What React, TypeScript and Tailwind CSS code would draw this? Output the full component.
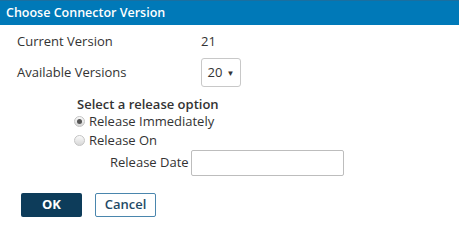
export default function App() {
  return (
    <div className="w-[459px] h-[227px] bg-white font-['Open_Sans',sans-serif] text-[#333]">
      <div className="h-[25px] bg-[#0079b8] border-t border-[#1a6fa0] px-[6px] flex items-center">
        <h1 className="text-[12.5px] font-semibold text-white leading-none">Choose Connector Version</h1>
      </div>
      <div className="pl-[17px] pt-[8px]">
        <div className="flex items-center h-[18px] text-[13px]">
          <span className="w-[184px]">Current Version</span>
          <span>21</span>
        </div>
        <div className="flex items-center mt-[7px] text-[13px]">
          <span className="w-[184px]">Available Versions</span>
          <div className="w-[40px] h-[29px] border border-[#c8c8c8] rounded-[3px] flex items-center justify-center gap-[4px]">
            <span>20</span>
            <span className="text-[8px]">▼</span>
          </div>
        </div>
        <div className="pl-[57px] mt-[9px] text-[13px]">
          <div className="pl-[3px] font-semibold leading-[16px]">Select a release option</div>
          <label className="flex items-center gap-[4px] leading-[19px]">
            <span className="w-[11px] h-[11px] rounded-full border border-[#c4c4c4] bg-gradient-to-b from-[#fafafa] to-[#d8d8d8] flex items-center justify-center">
              <span className="w-[5px] h-[5px] rounded-full bg-[#555]" />
            </span>
            Release Immediately
          </label>
          <label className="flex items-center gap-[4px] leading-[19px]">
            <span className="w-[11px] h-[11px] rounded-full border border-[#c4c4c4] bg-gradient-to-b from-[#fafafa] to-[#d8d8d8]" />
            Release On
          </label>
          <div className="flex items-center gap-[2px] pl-[36px]">
            <span>Release Date</span>
            <div className="w-[153px] h-[26px] border border-[#bdbdbd] rounded-[2px]" />
          </div>
        </div>
        <div className="flex gap-[13px] mt-[17px] pl-[4px]">
          <button className="w-[61px] h-[24px] bg-[#0d3c5a] text-white text-[13px] font-bold rounded-[2px]">OK</button>
          <button className="w-[61px] h-[24px] border border-[#4a86ad] text-[#1f4a66] text-[13px] font-semibold rounded-[2px]">Cancel</button>
        </div>
      </div>
    </div>
  );
}
